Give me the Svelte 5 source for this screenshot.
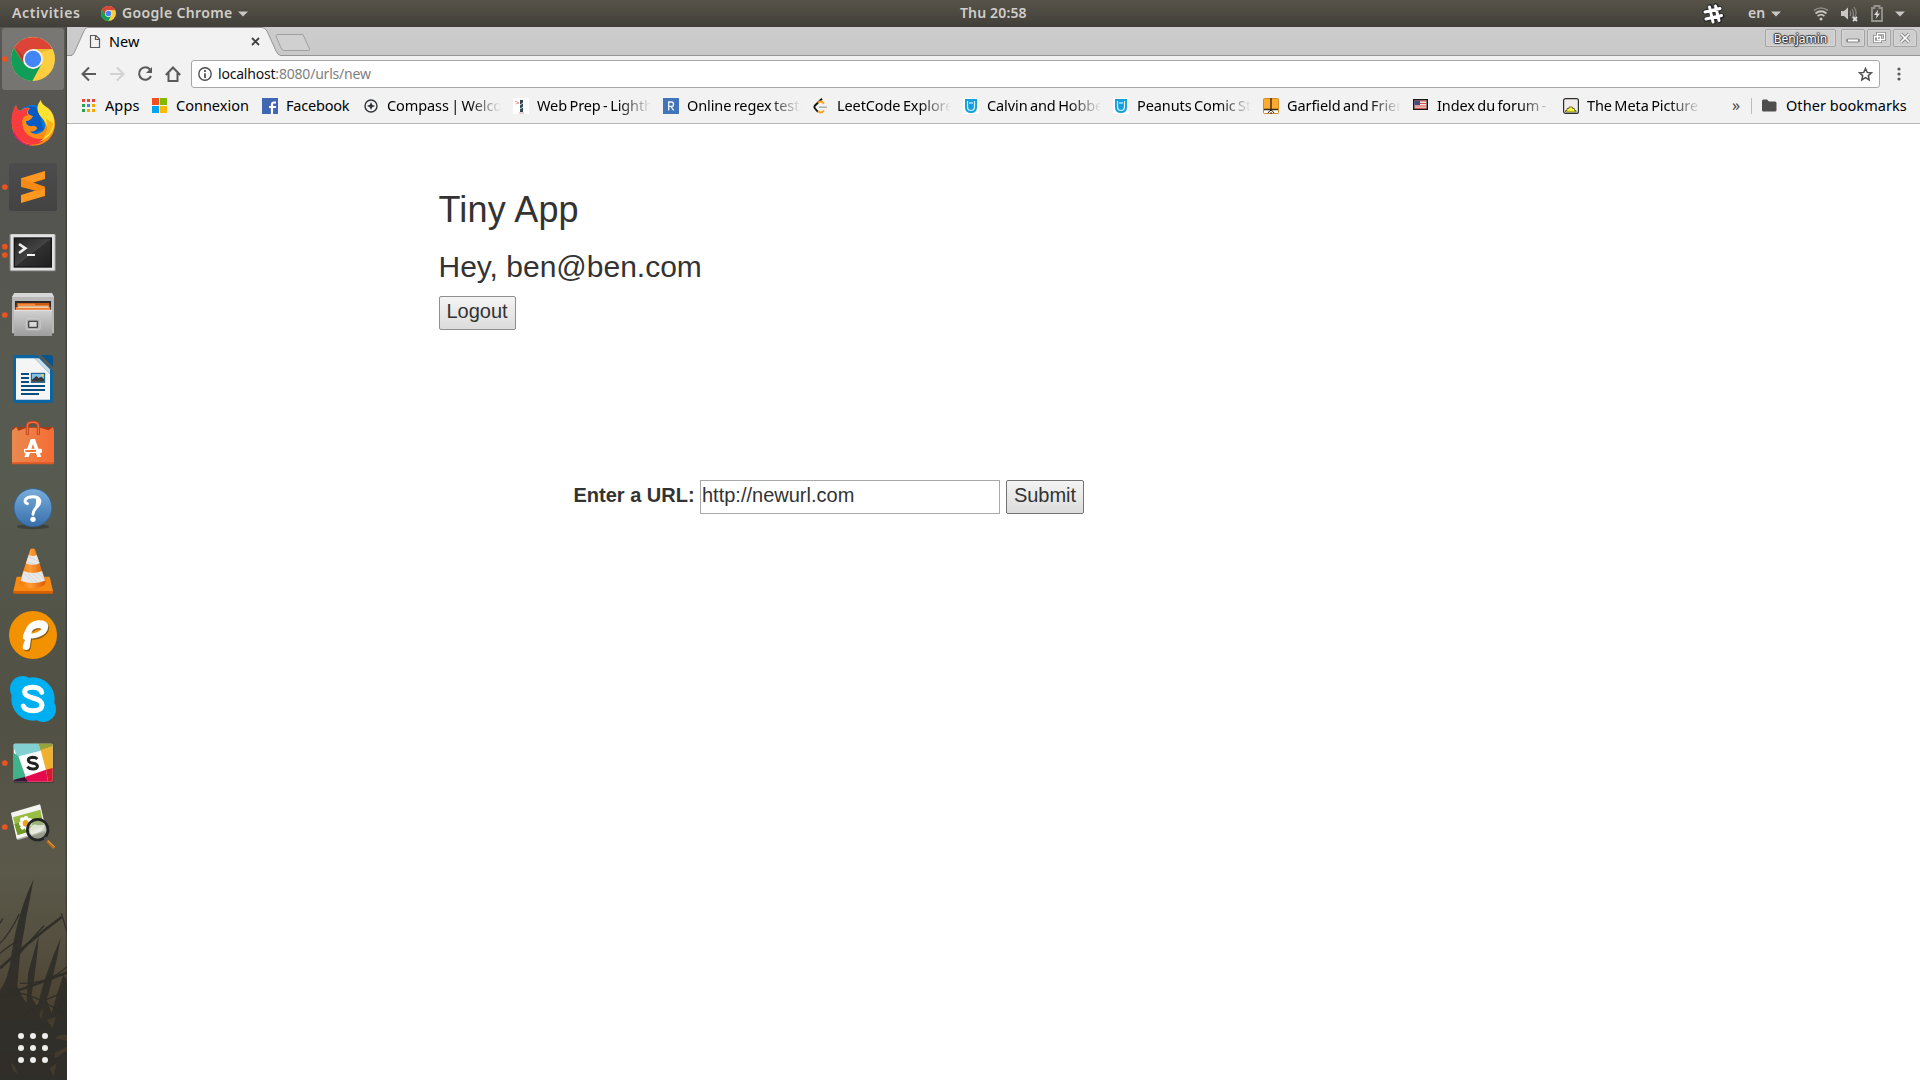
<script>
  const bookmarks = [
    { icon: 'compass', label: 'Compass | Welcome' },
    { icon: 'web', label: 'Web Prep - Lighthouse' },
    { icon: 'regex', label: 'Online regex tester' },
    { icon: 'leet', label: 'LeetCode Explore' },
    { icon: 'comic', label: 'Calvin and Hobbes' },
    { icon: 'comic', label: 'Peanuts Comic Strip' },
    { icon: 'garfield', label: 'Garfield and Friends' },
    { icon: 'flag', label: 'Index du forum - A' },
    { icon: 'meta', label: 'The Meta Picture -' }
  ];
  // Each launcher icon is drawn on a 201 x 192 grid; top is where its slot starts.
  const launchers = [
    { id: 'chrome', top: 21, dots: [117], active: true },
    { id: 'firefox', top: 213, dots: [] },
    { id: 'sublime', top: 405, dots: [501] },
    { id: 'terminal', top: -3, dots: [80, 105] },
    { id: 'files', top: 189, dots: [285] },
    { id: 'writer', top: 381, dots: [] },
    { id: 'software', top: 573, dots: [] },
    { id: 'help', top: 15, dots: [] },
    { id: 'vlc', top: 207, dots: [] },
    { id: 'pencil', top: 399, dots: [] },
    { id: 'skype', top: 21, dots: [] },
    { id: 'slack', top: 213, dots: [309] },
    { id: 'viewer', top: 405, dots: [501] }
  ];
  const grid = [0, 1, 2];
  const appColors = ['#e8453c', '#e8453c', '#e8453c', '#2ba24c', '#3b83f6', '#f5a800', '#2ba24c', '#f5a800', '#f5a800'];
  let url = $state('http://newurl.com');
</script>

{#snippet chromeLogo()}
  <circle cx="99" cy="117" r="66" fill="#ffcd40" />
  <path d="M42 84A66 66 0 0 1 157 87H99L71 132Z" fill="#db4437" />
  <path d="M42 84A66 66 0 0 0 97 183L126 130L99 147L72 132Z" fill="#0f9d58" />
  <path d="M45 80L74 132L71 110Z" fill="#a5352b" opacity=".7" />
  <path d="M99 87H157L126 97Z" fill="#d9a52d" opacity=".5" />
  <circle cx="99" cy="117" r="30" fill="#f3f3f3" />
  <circle cx="99" cy="117" r="24.500" fill="#4285f4" />
{/snippet}

<div class="desktop">
  <header class="topbar">
    <span class="activities">Activities</span>
    <svg class="mini-chrome" viewBox="33 51 132 132">{@render chromeLogo()}</svg>
    <span class="appname">Google Chrome</span>
    <svg class="caret" width="10" height="6"><path d="M0 .5H10L5 5.500Z" fill="#c9c7c3" /></svg>
    <span class="clock">Thu 20:58</span>
    <div class="tray">
      <svg class="hash" width="24" height="24" viewBox="0 0 24 24">
        <path d="M9 4.500L12.500 20M15 3.500L18.500 18.500M4 10L19 6.500M5 17.500L21 14" stroke="#28282a" stroke-width="5" stroke-linecap="round" fill="none" />
        <path d="M8.500 5L12 20M14.500 4L18 18.500M4 10L19 6.500M5 17L20.500 13.500" stroke="#fff" stroke-width="3" stroke-linecap="round" fill="none" />
      </svg>
      <span class="lang">en</span>
      <svg class="caret lang-caret" width="10" height="6"><path d="M0 .5H10L5 5.500Z" fill="#c9c7c3" /></svg>
      <svg class="wifi" width="16" height="16" viewBox="0 0 16 16" fill="none" stroke="#c9c7c3" stroke-width="1.700">
        <path d="M1 4.500Q8-.5 15 4.500" stroke="#8b8983" /><path d="M2.500 7.500Q8 3 13.500 7.500M4.600 10Q8 7.200 11.400 10" /><circle cx="8" cy="13" r="1.500" fill="#c9c7c3" stroke="none" />
      </svg>
      <svg class="sound" width="17" height="16" viewBox="0 0 17 16">
        <path d="M0 5H3L7 1.500V13.500L3 10H0Z" fill="#c9c7c3" />
        <path d="M9 5Q10.500 7.500 9 10M11 3Q14 7.500 11 12M13 1Q17 7 13.500 11" stroke="#85837d" stroke-width="1.300" fill="none" />
        <path d="M12 11L16 15M16 11L12 15" stroke="#ddd" stroke-width="1.800" />
      </svg>
      <svg class="battery" width="12" height="17" viewBox="0 0 12 17">
        <path d="M3.500 1H8.500V3H11V16H1V3H3.500Z" fill="none" stroke="#96948e" stroke-width="1.800" /><path d="M7.200 4.500L3 10H5.600L4.800 14L9 8.500H6.400Z" fill="#dad8d4" />
      </svg>
      <svg class="caret" width="10" height="6"><path d="M0 .5H10L5 5.500Z" fill="#c9c7c3" /></svg>
    </div>
  </header>

  <div class="body">
    <nav class="dock">
      <svg class="grass" viewBox="0 0 201 690" fill="#302e29" stroke="#302e29">
        <path stroke="none" opacity=".95" d="M0 420Q25 390 35 310Q55 180 101 88Q78 200 60 315L52 408Q65 440 80 460L84 370Q100 310 116 257Q112 330 94 440L112 470Q135 370 182 264Q164 370 140 450L155 490Q170 430 190 375L201 390V690H0Z" />
        <path fill="none" stroke-width="8" d="M0 355Q80 280 185 201M0 440Q90 410 201 368" />
        <path fill="none" stroke-width="4" d="M0 280Q30 250 58 192M0 310Q30 285 55 272M0 220L8 205M184 190L201 245M56 315Q95 265 132 227M60 400Q150 400 201 350M60 430Q120 440 201 500M100 540Q160 530 201 420M150 690Q165 600 201 585M70 500Q150 430 201 430" />
        <path fill="#49402e" stroke="none" opacity=".75" d="M118 490L130 475L124 510ZM140 510L168 500L158 535ZM165 565Q180 550 201 555V572ZM163 610L201 590V600L166 625ZM34 638Q45 645 52 670Q35 665 34 638ZM150 655L170 640L160 680Z" />
      </svg>
      {#each launchers as item}
        <svg class="launcher" class:active={item.active} viewBox="0 {item.top} 201 192">
          {#if item.active}<rect x="6" y="24" width="186" height="186" rx="10" fill="#fff" opacity=".19" />{/if}
          {#each item.dots as cy}<circle cx="14.500" {cy} r="8.500" fill="#e95420" />{/each}
          {#if item.id === 'chrome'}
            {@render chromeLogo()}
          {:else if item.id === 'firefox'}
            <circle cx="99" cy="310" r="55" fill="#0879dc" />
            <path d="M62 275Q85 248 115 266L130 330L95 340Z" fill="#075bc3" />
            <path d="M48 255Q50 270 61 273Q76 258 90 264Q80 276 86 283L99 289Q92 302 78 304Q77 318 93 319Q108 314 112 325Q103 339 88 333Q106 352 130 333Q144 314 126 294Q104 274 122 240Q124 256 145 264Q165 285 165 312C163 390 57 400 38 330Q29 290 48 255Z" fill="#ff8b18" />
            <path d="M48 255Q50 270 61 273Q75 262 88 264Q76 278 84 285Q64 288 67 313Q74 357 123 357Q135 355 145 345Q120 386 76 368C29 349 26 285 48 255Z" fill="#f83b3c" />
            <path d="M38 325Q54 371 98 375Q65 380 43 346Z" fill="#e4117f" />
            <path d="M122 240Q104 263 119 286Q144 310 143 334Q135 356 117 366Q154 354 163 318Q165 279 142 263Q124 252 122 240Z" fill="#ffe333" />
            <path d="M138 296Q149 329 130 352Q155 344 160 310Z" fill="#ffb21a" />
          {:else if item.id === 'sublime'}
            <defs><linearGradient id="sub" x2="0" y2="1"><stop stop-color="#4c4c4c" /><stop offset="1" stop-color="#434343" /></linearGradient></defs>
            <rect x="27" y="430" width="144" height="143" rx="8" fill="url(#sub)" />
            <path d="M63 475L135 453V477L87 492L135 506V528L63 549V525L109 511L63 500Z" fill="#ff9820" />
            <path d="M63 475L135 500V506L112 514L63 500Z" fill="#f68a14" />
          {:else if item.id === 'terminal'}
            <defs><linearGradient id="term" x2="1" y2="1"><stop stop-color="#232323" /><stop offset=".5" stop-color="#444" /><stop offset=".51" stop-color="#303030" /><stop offset="1" stop-color="#202020" /></linearGradient></defs>
            <rect x="29" y="42" width="138" height="112" rx="4" fill="#979797" /><rect x="32" y="43" width="132" height="108" rx="3" fill="#e2e2e2" />
            <rect x="41" y="52" width="115" height="91" fill="#141414" /><rect x="45" y="56" width="107" height="83" fill="url(#term)" />
            <path d="M57 72L76 85L57 99" fill="none" stroke="#eee" stroke-width="8" /><path d="M81 105H105" stroke="#f5f5f5" stroke-width="6" />
          {:else if item.id === 'files'}
            <defs><linearGradient id="cab" x2="0" y2="1"><stop stop-color="#d1d1d1" /><stop offset="1" stop-color="#9d9d9d" /></linearGradient></defs>
            <path d="M43 219H156L162 231V340H36V231Z" fill="#b8b8b8" /><path d="M43 219H156L162 231H36Z" fill="#d6d6d6" />
            <rect x="45" y="243" width="108" height="32" fill="#292929" /><path d="M50 249H148V258H50Z" fill="#c95c16" /><path d="M54 251H103L107 256H148V259H54Z" fill="#f58a3b" /><path d="M47 260H151V274H47Z" fill="#f17c2d" /><path d="M53 259H146V263H53Z" fill="#fff2dc" />
            <path d="M42 270H156V348H42Z" fill="url(#cab)" /><path d="M42 271H156" stroke="#e5e5e5" stroke-width="3" />
            <rect x="79" y="297" width="41" height="32" rx="5" fill="#aaa" stroke="#d1d1d1" stroke-width="3" /><rect x="86" y="304" width="26" height="18" rx="2" fill="#d9d9d9" stroke="#474747" stroke-width="4" />
          {:else if item.id === 'writer'}
            <path d="M47 405H111L159 453V541Q159 549 151 549H47Q39 549 39 541V413Q39 405 47 405Z" fill="#0a65a0" /><path d="M123 405H152Q159 405 159 413V441Z" fill="#07558e" />
            <path d="M48 415H104L150 462V539H48Z" fill="#f5f5f5" /><path d="M104 415L150 462V448L117 415Z" fill="#ccdce7" />
            <path d="M63 462H87M63 474H87M63 486H87M63 498H135M63 510H135M63 522H117" stroke="#074e7f" stroke-width="6" /><rect x="94" y="460" width="40" height="27" fill="#83c1e6" stroke="#0a5688" stroke-width="3" /><path d="M96 485V479L109 468L116 474L124 470L132 477V485Z" fill="#393939" /><circle cx="127" cy="466" r="4" fill="#f9ce43" />
          {:else if item.id === 'software'}
            <defs><linearGradient id="bag" x2="1" y2="0"><stop stop-color="#e98a4f" /><stop offset="1" stop-color="#f66c32" /></linearGradient></defs>
            <path d="M39 621H159L162 632H36Z" fill="#a73b18" /><path d="M36 632L49 621L55 632L80 623H120L146 631L159 621L162 632V732H36Z" fill="url(#bag)" /><path d="M36 727H162V733H36Z" fill="#da5927" />
            <path d="M82 644V620Q82 607 94 607H103Q115 607 115 620V644" fill="none" stroke="#bf431c" stroke-width="9" /><path d="M82 642V620Q82 607 94 607H103Q115 607 115 620V642" fill="none" stroke="#ed7142" stroke-width="4" />
            <path d="M92 657H105L124 711H112L99 672L86 711H73Z" fill="#fff" /><rect x="72" y="686" width="54" height="13" rx="4" fill="#fff" /><rect x="76" y="690" width="32" height="6" fill="#f47532" />
          {:else if item.id === 'help'}
            <defs><linearGradient id="help" x2="0" y2="1"><stop stop-color="#79add9" /><stop offset="1" stop-color="#376fad" /></linearGradient></defs>
            <ellipse cx="99" cy="170" rx="48" ry="8" fill="#282a26" opacity=".5" /><circle cx="99" cy="113" r="57" fill="url(#help)" stroke="#356491" stroke-width="3" />
            <path d="M82 101Q72 97 77 88C84 78 115 76 119 91C125 107 99 112 99 133" fill="none" stroke="#fff" stroke-width="9" stroke-linecap="round" /><path d="M107 83Q126 92 114 107L103 119Q111 97 107 83Z" fill="#fff" /><circle cx="99" cy="148" r="8" fill="#fff" />
          {:else if item.id === 'vlc'}
            <defs><linearGradient id="cone"><stop stop-color="#f57900" /><stop offset=".4" stop-color="#ff9d3b" /><stop offset="1" stop-color="#db5a00" /></linearGradient></defs>
            <path d="M50 320H149L159 364H40Z" fill="#f88a13" /><path d="M40 363H159V371H40Z" fill="#d76000" />
            <path d="M60 334L91 238Q98 233 105 238L136 334Q139 352 98 355Q57 352 60 334Z" fill="url(#cone)" /><path d="M86 255Q98 261 110 255L119 280Q98 289 78 280ZM71 303Q98 315 126 303L135 332Q98 346 62 332Z" fill="#e8e8e8" />
            <path d="M86 260L116 275M80 275L106 284M71 308L99 337M84 311L111 337M99 311L122 333M112 309L134 327M124 307L130 313" stroke="#b9b9b9" stroke-width="2" stroke-dasharray="3 3" />
          {:else if item.id === 'pencil'}
            <circle cx="99" cy="495" r="72" fill="#f39200" />
            <path d="M69 537Q66 530 75 510Q63 507 73 487Q83 455 113 451Q142 449 145 468Q144 492 115 502Q102 506 93 505L89 533Q84 545 69 537Z" fill="#8d5e17" transform="translate(3 4)" />
            <path fill-rule="evenodd" d="M69 537Q66 530 75 510Q63 507 73 487Q83 455 113 451Q142 449 145 468Q144 492 115 502Q102 506 93 505L89 533Q84 545 69 537Z" fill="#fff" />
            <path d="M94 491Q116 488 124 478Q119 471 104 479Q96 484 94 491Z" fill="#f39200" /><path d="M94 489Q99 476 112 475Q122 474 124 479Q116 476 106 481Q100 484 94 489Z" fill="#8d5e17" />
          {:else if item.id === 'skype'}
            <circle cx="99" cy="117" r="65" fill="#00aff0" /><circle cx="68" cy="86" r="38" fill="#00aff0" /><circle cx="130" cy="148" r="38" fill="#00aff0" />
            <path d="M125 97Q120 82 99 82Q74 82 74 96Q74 107 99 114Q126 120 126 136Q125 152 99 152Q75 152 70 138" fill="none" stroke="#fff" stroke-width="15" stroke-linecap="round" />
          {:else if item.id === 'slack'}
            <rect x="41" y="255" width="119" height="114" rx="4" fill="#242a24" opacity=".5" /><rect x="41" y="251" width="117" height="114" rx="4" fill="#fff" />
            <path d="M45 251H115L122 272L51 290L41 262V255Q41 251 45 251Z" fill="#82d0d1" /><path d="M115 251H154Q158 251 158 255V259L122 272Z" fill="#97a23d" /><path d="M122 270L158 259V326L138 331Z" fill="#efb12d" />
            <path d="M41 278L55 288L77 350L41 360Z" fill="#41b38b" /><path d="M77 350L138 329L144 365H79Z" fill="#e30b4d" /><path d="M138 329L158 324V361Q158 365 154 365H144Z" fill="#d51a2e" /><path d="M41 359L75 350L83 365H41Z" fill="#331533" />
            <path d="M112 297Q107 292 98 292Q84 293 85 301Q86 308 99 310Q114 312 112 321Q109 328 98 327Q88 327 82 320" fill="none" stroke="#222" stroke-width="9" />
          {:else}
            <path d="M34 461L121 435L139 515L52 541Z" fill="#aaa" /><path d="M33 458L120 433L138 511L50 537Z" fill="#f4f4f1" /><path d="M39 472L121 449L132 501L53 525Z" fill="#98bd43" /><path d="M43 492L125 472L132 501L53 525Z" fill="#729926" />
            <g fill="#fff"><circle cx="64" cy="491" r="7" /><circle cx="67" cy="479" r="7" /><circle cx="78" cy="475" r="7" /><circle cx="89" cy="481" r="7" /><circle cx="90" cy="492" r="7" /><circle cx="68" cy="502" r="7" /><circle cx="80" cy="504" r="6" /></g><circle cx="77" cy="490" r="9" fill="#f2a20b" />
            <circle cx="113" cy="509" r="31" fill="#b4bea8" opacity=".65" /><path d="M88 510Q97 488 114 496L133 495Q131 514 112 519L95 524Z" fill="#f4f4ef" opacity=".75" /><circle cx="113" cy="509" r="31" fill="none" stroke="#222426" stroke-width="8" /><path d="M134 532L142 542" stroke="#555" stroke-width="8" /><path d="M142 543L163 564" stroke="#b76c15" stroke-width="9" /><path d="M143 541L164 561" stroke="#f3a943" stroke-width="3" />
          {/if}
        </svg>
      {/each}
      <svg class="app-grid" viewBox="0 0 36 36" fill="#eeeeec">
        {#each grid as r}{#each grid as c}<circle cx={6 + c * 12} cy={6 + r * 12} r="3" />{/each}{/each}
      </svg>
    </nav>

    <section class="browser">
      <div class="tabs">
        <svg class="tab-shape" width="250" height="29">
          <path d="M5 28.500C7 27 8 24 10 20L17 4Q18 .5 21 .5H195Q198 .5 200 4L209 24Q211 28.500 214 28.500V29H5Z" fill="#f2f2f2" />
          <path d="M0 28.500H4Q6.500 28.500 8 24L17 4Q18 .5 21 .5H195Q198 .5 200 4L209 24Q211 28.500 214 28.500" fill="none" stroke="#969696" />
          <path d="M211 7.500H236L242.500 22Q243 23.500 241 23.500H217Q215 23.500 214 21L209 9Q209 7.500 211 7.500Z" fill="#d0d0d0" stroke="#a0a0a0" />
        </svg>
        <div class="tab-content">
          <svg width="12" height="15" viewBox="0 0 12 15" fill="none" stroke="#5a5a5a" stroke-width="1.200"><path d="M1.500 1.500H7L10.500 5V13.500H1.500ZM6.500 1.500V5.500H10.500" /></svg>
          <span>New</span>
          <svg class="close" width="9" height="9"><path d="M1 1L8 8M8 1L1 8" stroke="#404040" stroke-width="1.800" /></svg>
        </div>
        <div class="window-controls">
          <div class="profile">Benjamin</div>
          <div class="ctl"><svg width="22" height="16"><path d="M6 10.500H16" stroke="#888" stroke-width="4" stroke-linecap="round" /><path d="M6 10.500H16" stroke="#fff" stroke-width="2" /></svg></div>
          <div class="ctl"><svg width="22" height="16" fill="none"><g stroke="#888" stroke-width="3"><path d="M9.500 3.500H16.500V9.500H9.500ZM6.500 6.500H12.500V11.500H6.500Z" /></g><g stroke="#fff" stroke-width="1.300"><path d="M9.500 3.500H16.500V9.500H9.500ZM6.500 6.500H12.500V11.500H6.500Z" /></g></svg></div>
          <div class="ctl last"><svg width="22" height="16"><path d="M7 4L15 12M15 4L7 12" stroke="#888" stroke-width="3.500" /><path d="M7 4L15 12M15 4L7 12" stroke="#fff" stroke-width="1.700" /></svg></div>
        </div>
      </div>

      <div class="toolbar">
        <div class="nav-icons">
          <svg viewBox="0 0 16 16" fill="none" stroke="#5a5a5a" stroke-width="2"><path d="M15 8H2M8 1.500L1.500 8L8 14.500" /></svg>
          <svg viewBox="0 0 16 16" fill="none" stroke="#d2d2d2" stroke-width="2"><path d="M1 8H14M8 1.500L14.500 8L8 14.500" /></svg>
          <svg viewBox="0 0 16 16"><path d="M13 3.500A6.200 6.200 0 1 0 14 10" fill="none" stroke="#5a5a5a" stroke-width="2" /><path d="M15 1V7H9Z" fill="#5a5a5a" /></svg>
          <svg viewBox="0 0 16 16" fill="none" stroke="#5a5a5a" stroke-width="2"><path d="M.8 9L8 1.500L15.200 9M3.500 7V15H12.500V7" /></svg>
        </div>
        <div class="omnibox">
          <svg width="14" height="14" fill="none" stroke="#4d4d4d"><circle cx="7" cy="7" r="6.200" stroke-width="1.400" /><path d="M7 6.200V11M7 3V5" stroke-width="1.700" /></svg>
          <span class="address"><b>localhost</b>:8080/urls/new</span>
          <svg class="star" width="15" height="15" viewBox="0 0 15 15"><path d="M7.500 1.500L9.200 5.400L13.500 5.900L10.300 8.600L11.200 13L7.500 10.700L3.800 13L4.700 8.600L1.500 5.900L5.800 5.400Z" fill="none" stroke="#4f4f4f" stroke-width="1.500" /></svg>
        </div>
        <svg class="menu" width="4" height="14" fill="#5a5a5a"><circle cx="2" cy="2" r="1.600" /><circle cx="2" cy="7" r="1.600" /><circle cx="2" cy="12" r="1.600" /></svg>
      </div>

      <div class="bookmarks">
        <svg class="apps-icon" width="13" height="13">{#each appColors as fill, i}<rect x={(i % 3) * 5} y={Math.floor(i / 3) * 5} width="3" height="3" {fill} />{/each}</svg>
        <span class="bm-apps">Apps</span>
        <svg width="15" height="15"><path d="M0 0H7V7H0Z" fill="#f25022" /><path d="M8 0H15V7H8Z" fill="#7fba00" /><path d="M0 8H7V15H0Z" fill="#00a4ef" /><path d="M8 8H15V15H8Z" fill="#ffb900" /></svg>
        <span class="bm-conn">Connexion</span>
        <svg width="16" height="16"><path d="M0 0H16V16H0Z" fill="#4267b2" /><path d="M10 16V6.500Q10 4.500 12 4.500H14M7 9H14" stroke="#fff" stroke-width="2.200" fill="none" /></svg>
        <span class="bm-fb">Facebook</span>
        {#each bookmarks as mark}
          <div class="bookmark">
            <svg width="16" height="16" viewBox="0 0 16 16">
              {#if mark.icon === 'compass'}
                <circle cx="8" cy="8" r="6" fill="none" stroke="#30343a" stroke-width="1.400" /><path d="M8 4L9.200 6.800L12 8L9.200 9.200L8 12L6.800 9.200L4 8L6.800 6.800Z" fill="#30343a" />
              {:else if mark.icon === 'web'}
                <path d="M0 0H16V16H0Z" fill="#fff" /><path d="M7 2H10V14H7Z" fill="#344451" /><path d="M7 7L10 5M7 11L10 9" stroke="#c4e5e6" /><path d="M2 3L6 5L3 6" stroke="#f09a91" fill="none" /><path d="M6 15H11" stroke="#d3a7a2" />
              {:else if mark.icon === 'regex'}
                <path d="M0 0H16V16H0Z" fill="#4174b9" /><path d="M5.700 12.500V4H8.500Q10.500 4 10.500 6.200T8.500 8.400H5.700M8 8.400L10.700 12.500" fill="none" stroke="#f4f7fb" stroke-width="1.300" />
              {:else if mark.icon === 'leet'}
                <path d="M9 .8L2 7.500Q.8 9 2 10.500L5 14" fill="none" stroke="#111" stroke-width="1.900" /><path d="M5 5L7 3.500Q8.500 3 11 5.500M5 13L7 14.500Q9 15 11 12.500" fill="none" stroke="#f9a31b" stroke-width="2" /><path d="M6 9.200H14" stroke="#b3b3b3" stroke-width="1.700" />
              {:else if mark.icon === 'comic'}
                <path d="M0 0H16V16H0Z" fill="#fff" /><path d="M2 1H14V9Q14 15 8 15T2 9Z" fill="#169fdb" /><path d="M4.500 3V8.500Q4.500 12.500 8 12.500T11.500 8.500V3M7 4V6M9 4V6" fill="none" stroke="#d4f2ff" stroke-width="1.200" />
              {:else if mark.icon === 'garfield'}
                <rect x=".5" y=".5" width="15" height="15" rx="1" fill="#fbab30" stroke="#d18b27" /><path d="M1 12H15V15H1Z" fill="#fff" /><path d="M8 0V12M1 11.500H15" stroke="#3b2c17" stroke-width="1.400" /><path d="M5 15L7 12.500H9L11 15M7 15H9" fill="none" stroke="#222" />
              {:else if mark.icon === 'flag'}
                <path d="M0 1H15V12H0Z" fill="#171717" /><path d="M1.500 2.500H13.500V10.500H1.500Z" fill="#f3e5e2" /><path d="M1.500 3H13.500M1.500 5.500H13.500M1.500 8H13.500M1.500 10.200H13.500" stroke="#d94c42" /><path d="M1.500 2.500H7V7H1.500Z" fill="#3b4d82" />
              {:else}
                <rect x=".6" y=".6" width="14.800" height="14.800" rx="2" fill="#f2eded" stroke="#2d2d2d" stroke-width="1.200" /><path d="M2.500 14V12.500H4V10.500H6V9H9.500V10.500H11.500V12.500H13V14Z" fill="#f9f334" stroke="#555228" stroke-width=".8" />
              {/if}
            </svg>
            <span>{mark.label}</span>
          </div>
        {/each}
        <span class="more">»</span>
        <i class="separator"></i>
        <svg class="folder" width="15" height="13"><path d="M0 2Q0 .5 1.500 .5H5L7 2.500H13Q14.500 2.500 14.500 4V11Q14.500 12.500 13 12.500H1.500Q0 12.500 0 11Z" fill="#4e4e4e" /></svg>
        <span class="other">Other bookmarks</span>
      </div>

      <main>
        <h1>Tiny App</h1>
        <h2>Hey, ben@ben.com</h2>
        <button class="logout">Logout</button>
        <form>
          <label for="url">Enter a URL:</label>
          <input id="url" bind:value={url} />
          <button type="button">Submit</button>
        </form>
      </main>
    </section>
  </div>
</div>

<style>
  :global(body) { margin: 0; overflow: hidden; }
  * { box-sizing: border-box; }
  svg { display: block; flex: none; }
  .desktop { width: 1920px; height: 1080px; display: flex; flex-direction: column; font-family: "Noto Sans", "Open Sans", sans-serif; background: #fff; }
  .topbar { height: 27px; flex: none; display: flex; align-items: center; background: linear-gradient(#575349, #403f39); color: #d0ceca; font-size: 14px; font-weight: 600; line-height: 24px; white-space: nowrap; }
  .topbar span { padding-bottom: 2px; }
  .activities { width: 89px; padding-left: 12px; letter-spacing: .6px; }
  .mini-chrome { width: 15px; height: 15px; margin-left: 12px; }
  .appname { width: 111px; margin-left: 6px; letter-spacing: .35px; }
  .topbar > .caret { margin-left: 5px; }
  .clock { margin-left: 712px; letter-spacing: .15px; }
  .tray { margin-left: auto; padding-right: 15px; display: flex; align-items: center; }
  .lang { margin-left: 23px; width: 18px; }
  .lang-caret { margin-left: 5px; }
  .wifi { margin-left: 32px; }
  .sound { margin-left: 12px; }
  .battery { margin-left: 13px; }
  .battery + .caret { margin-left: 12px; }
  .body { display: flex; height: 1053px; }
  .dock { width: 67px; flex: none; position: relative; display: flex; flex-direction: column; background: linear-gradient(90deg, transparent 65px, #3a3a36 67px), linear-gradient(#595854 0%, #53534f 15%, #585a52 30%, #565a4f 45%, #515044 65%, #5a594a 80%, #544e3e 88%, #4b402e 94%, #353029 100%); }
  .grass { position: absolute; left: 0; bottom: 0; width: 67px; height: 230px; }
  .launcher { width: 67px; height: 64px; position: relative; }
  .app-grid { width: 36px; height: 36px; margin: auto 0 14px 15px; position: relative; }
  .browser { width: 1853px; display: flex; flex-direction: column; }
  .tabs { height: 29px; flex: none; display: flex; position: relative; background: linear-gradient(#ccc, #c9c9c9); box-shadow: inset 0 -1px #969696; }
  .tab-shape { position: absolute; left: 0; top: 0; }
  .tab-content { position: relative; display: flex; align-items: center; width: 171px; margin-left: 22px; height: 29px; font-size: 14.500px; color: #000; }
  .tab-content span { margin-left: 8px; padding-bottom: 2px; letter-spacing: .1px; }
  .close { margin-left: auto; }
  .window-controls { margin-left: auto; padding: 2px 3px 0 0; display: flex; gap: 2px; }
  .profile, .ctl { height: 18px; border: 1px solid #a4a4a4; border-radius: 2px; background: #cecece; box-shadow: inset 0 0 0 1px #d7d7d7; }
  .profile { width: 71px; margin-right: 3px; text-align: center; font-size: 12px; line-height: 17px; color: #fff; text-shadow: 0 0 1px #333, 1px 0 1px #333, -1px 0 1px #333, 0 1px 1px #333, 0 -1px 1px #333; }
  .ctl { width: 24px; }
  .last { border-top-right-radius: 5px; }
  .toolbar { height: 36px; flex: none; display: flex; align-items: center; background: #f2f2f2; }
  .nav-icons { width: 124px; display: flex; gap: 12px; padding-left: 14px; }
  .nav-icons svg { width: 16px; height: 16px; }
  .omnibox { width: 1689px; height: 28px; border: 1px solid #a7a7a7; border-radius: 3px; background: #fff; display: flex; align-items: center; padding: 0 6px; }
  .address { color: #808080; font-size: 14px; letter-spacing: -.2px; margin-left: 6px; padding-bottom: 2px; white-space: nowrap; }
  .address b { color: #111; font-weight: 400; }
  .star { margin-left: auto; }
  .menu { margin-left: 17px; }
  .bookmarks { height: 32px; flex: none; display: flex; align-items: center; padding: 0 0 4px 15px; background: #f2f2f2; border-bottom: 1px solid #b4b4b4; font-size: 14.500px; line-height: 22px; color: #000; white-space: nowrap; }
  .bookmarks span { padding-bottom: 2px; }
  .bm-apps { width: 47px; margin-left: 10px; letter-spacing: .1px; }
  .bm-conn { width: 86px; margin-left: 9px; letter-spacing: 0; }
  .bm-fb { width: 77px; margin-left: 8px; letter-spacing: -.2px; }
  .bookmark { width: 150px; flex: none; display: flex; align-items: center; gap: 8px; letter-spacing: -.1px; word-spacing: -1.200px; }
  .bookmark span { width: 114px; overflow: hidden; mask-image: linear-gradient(90deg, #000 82px, transparent 114px); }
  .more { width: 19px; margin-left: 19px; font-size: 16px; color: #444; }
  .separator { width: 1px; height: 16px; background: #bcbcbc; }
  .folder { margin-left: 10px; }
  .other { margin-left: 9px; letter-spacing: .05px; }
  main { flex: 1; padding: 63px 0 0 372px; color: #333; font-family: "Liberation Sans", Arial, sans-serif; }
  h1, h2 { margin: 0; font-weight: 400; line-height: 1.100; }
  h1 { font-size: 36px; height: 57px; padding-top: 3px; letter-spacing: .2px; margin-left: -.5px; }
  h2 { font-size: 30px; height: 52px; padding-top: 6px; margin-left: -.5px; }
  button { display: block; width: 78px; height: 34px; padding: 0 0 4px; font: 20px/28px "Liberation Sans", Arial, sans-serif; color: #333; background: linear-gradient(#f4f4f4, #dcdcdc); border: 1px solid #8f8f8f; border-radius: 2px; }
  .logout { width: 77px; padding: 0 1px 4px 0; }
  form { display: flex; align-items: center; margin: 150px 0 0 134.500px; font-size: 20px; }
  label { width: 126.500px; font-weight: 700; padding-bottom: 4px; white-space: nowrap; }
  input { width: 300px; height: 34px; margin: 0 6px 0 0; padding: 0 1px 4px; border: 1px solid #a9a9a9; border-radius: 0; font: 20px "Liberation Sans", Arial, sans-serif; color: #333; outline: none; background: #fff; }
  form button { border-color: #737373; }
</style>
